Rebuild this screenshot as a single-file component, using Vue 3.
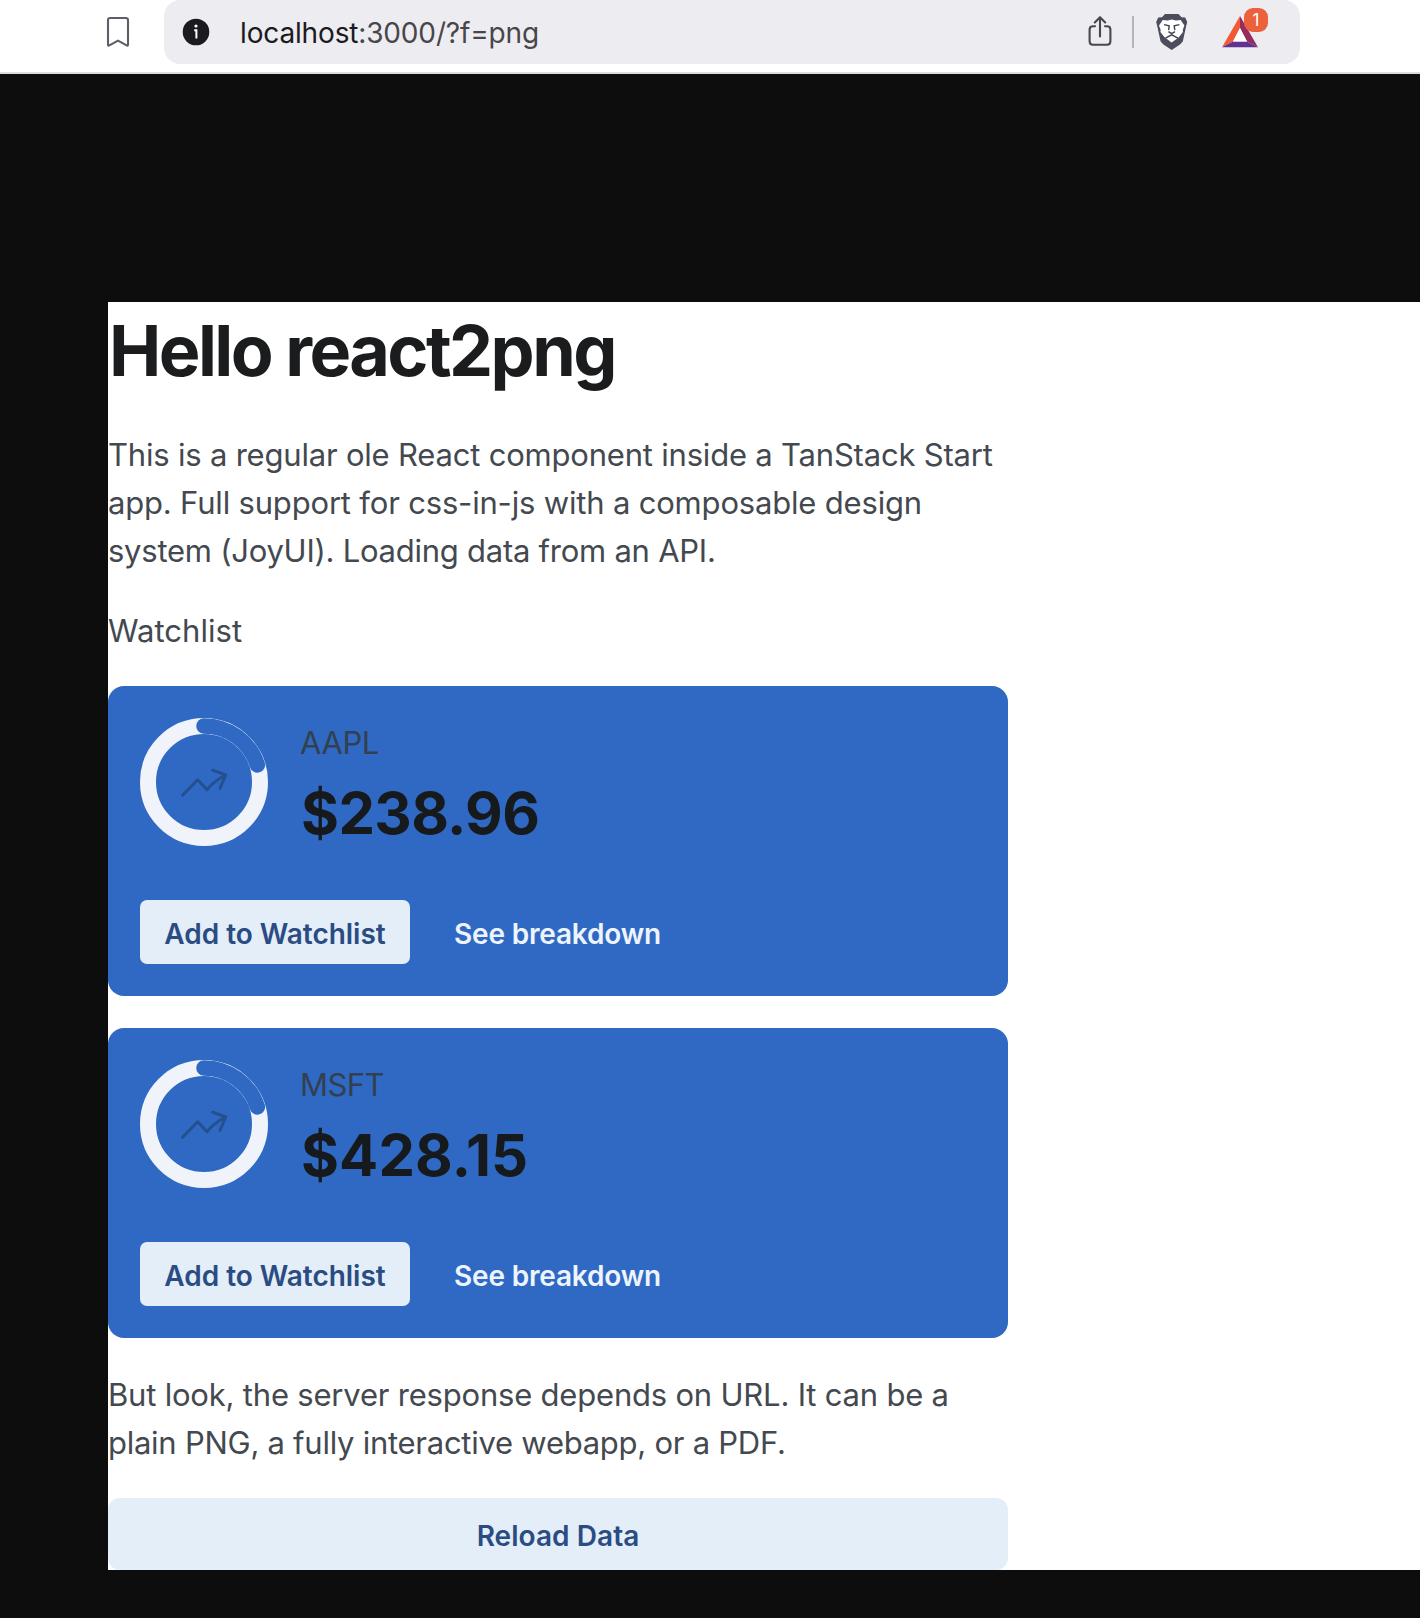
<script setup>
const stocks = [
  { symbol: 'AAPL', price: '$238.96', key: 'aapl' },
  { symbol: 'MSFT', price: '$428.15', key: 'msft' },
]
</script>

<template>
  <div class="window">
    <header class="toolbar">
      <svg class="bookmark" width="24" height="32" viewBox="0 0 24 32">
        <path d="M4.2 2H19.8Q22 2 22 4.2V28.6Q22 30.2 20.6 29.4L12 24.6L3.4 29.4Q2 30.2 2 28.6V4.2Q2 2 4.2 2Z" fill="none" stroke="#5d5e66" stroke-width="2.1" stroke-linejoin="round" />
      </svg>
      <div class="address">
        <svg class="info" width="28" height="28" viewBox="0 0 28 28">
          <circle cx="14" cy="14" r="13.3" fill="#1b1a20" />
          <circle cx="14" cy="8" r="1.6" fill="#fff" />
          <path d="M12.2 12.2H14.4V20.6" fill="none" stroke="#fff" stroke-width="2" />
        </svg>
        <div class="url"><span class="host">localhost</span>:3000/?f=png</div>
        <svg class="share" width="24" height="32" viewBox="0 0 24 32">
          <path d="M7 10.2H5Q1.6 10.2 1.6 13.6V25Q1.6 28.8 5 28.8H19Q22.4 28.8 22.4 25V13.6Q22.4 10.2 19 10.2H17M12 20.5V1.4M6.8 6.5L12 1.2L17.2 6.5" fill="none" stroke="#48474d" stroke-width="2.1" stroke-linecap="round" stroke-linejoin="round" />
        </svg>
        <span class="divider"></span>
        <svg class="lion" width="32" height="36" viewBox="0 0 32 36">
          <path d="M9 0H22.5L25.5 3.2L29.2 3.6L31.2 8L30.3 11.5L26.8 27.5L24 30.6L15.7 36L7.4 30.6L4.6 27.5L1.1 11.5L0.2 8L2.2 3.6L6 3.2Z" fill="#4b4d5d" />
          <path d="M6.7 6L11.5 6.6L15.7 5.6L20 6.6L24.7 6L28.4 11.5L26.7 16L27 18L22.6 23.6L15.7 28.4L8.8 23.6L4.4 18L4.7 16L3 11.5Z" fill="#fff" />
          <path d="M8 10.6L13.2 11.8L12.6 16.2M23.4 10.6L18.2 11.8L18.8 16.2M12.4 17.6L15.7 19.6L19 17.6M15.7 19.6V21.4M9.4 24.2L15.7 20.9L22 24.2" fill="none" stroke="#3f4150" stroke-width="1.4" />
        </svg>
        <div class="rewards">
          <svg width="36" height="32" viewBox="0 0 36 32">
            <path d="M18 0L0 31.2L11 25.5L18 12Z" fill="#f15a35" />
            <path d="M18 0L36 31.2L25 25.5L18 12Z" fill="#962b60" />
            <path d="M0 31.2H36L25 25.5H11Z" fill="#623091" />
            <path d="M18 12L25 25.5H11Z" fill="#fff" />
          </svg>
          <span class="badge">1</span>
        </div>
      </div>
    </header>

    <main class="canvas">
      <section class="page">
        <h1>Hello react2png</h1>
        <p class="copy">
          <span class="line intro-a">This is a regular ole React component inside a TanStack Start</span>
          <span class="line intro-b">app. Full support for css-in-js with a composable design</span>
          <span class="line intro-c">system (JoyUI). Loading data from an API.</span>
        </p>
        <p class="copy label">Watchlist</p>

        <article v-for="stock in stocks" :key="stock.symbol" class="card">
          <div class="summary">
            <svg class="progress" width="128" height="128" viewBox="0 0 128 128">
              <circle cx="64" cy="64" r="56" fill="none" stroke="#f0f4fa" stroke-width="16" />
              <circle cx="64" cy="64" r="56" fill="none" stroke="#2f69c3" stroke-width="15.6" stroke-linecap="round" stroke-dasharray="70.4 400" transform="rotate(-90 64 64)" />
              <path d="M42.6 77.3L57.7 61.8L67 71.8Q71.5 65 85.4 57M72.6 52.2L85.7 57L80 70.4" fill="none" stroke="#24508f" stroke-width="3" stroke-linecap="round" stroke-linejoin="round" />
            </svg>
            <div class="quote">
              <div class="symbol" :class="stock.key">{{ stock.symbol }}</div>
              <h2 :class="stock.key">{{ stock.price }}</h2>
            </div>
          </div>
          <div class="actions">
            <button class="soft">Add to Watchlist</button>
            <button class="plain">See breakdown</button>
          </div>
        </article>

        <p class="copy">
          <span class="line outro-a">But look, the server response depends on URL. It can be a</span>
          <span class="line outro-b">plain PNG, a fully interactive webapp, or a PDF.</span>
        </p>
        <button class="reload">Reload Data</button>
      </section>
    </main>
  </div>
</template>

<style>
body {
  margin: 0;
  background: #0d0d0d;
}
</style>

<style scoped>
.window {
  width: 1420px;
  height: 1618px;
  overflow: hidden;
  box-sizing: border-box;
  background: #0d0d0d;
  font-family: "Inter", "Liberation Sans", sans-serif;
}
.toolbar {
  display: flex;
  align-items: flex-start;
  box-sizing: border-box;
  height: 74px;
  padding-left: 106px;
  background: #fff;
  border-bottom: 2px solid #dddce0;
}
.bookmark {
  margin: 16px 34px 0 0;
}
.address {
  display: flex;
  align-items: center;
  box-sizing: border-box;
  width: 1136px;
  height: 64px;
  padding: 0 42px 0 18px;
  border-radius: 16px;
  background: #edecf1;
}
.info {
  margin-right: 30px;
}
.url {
  flex: 1;
  padding-top: 1px;
  color: #47464b;
  font-size: 28px;
  line-height: 40px;
  letter-spacing: -0.15px;
}
.host {
  color: #1b1a20;
}
.share {
  margin-right: 20px;
}
.divider {
  width: 2px;
  height: 32px;
  margin-right: 22px;
  background: #b5b4b9;
}
.lion {
  margin-right: 34px;
}
.rewards {
  position: relative;
  width: 36px;
  height: 32px;
}
.rewards svg {
  display: block;
}
.badge {
  position: absolute;
  top: -8px;
  left: 22px;
  width: 24px;
  height: 24px;
  border-radius: 9px;
  background: #ea613c;
  color: #fff;
  font-size: 17px;
  line-height: 24px;
  text-align: center;
}
.canvas {
  padding: 228px 0 48px 108px;
}
.page {
  display: flex;
  flex-direction: column;
  gap: 32px;
  box-sizing: border-box;
  height: 1268px;
  padding-right: 412px;
  background: #fff;
}
h1,
h2,
p {
  margin: 0;
}
h1 {
  box-sizing: border-box;
  height: 96px;
  padding: 1px 0 0 1px;
  color: #1a1c1e;
  font-size: 70px;
  font-weight: 700;
  line-height: 96px;
  letter-spacing: -2.55px;
  white-space: nowrap;
}
.copy {
  padding-top: 1px;
  margin-bottom: -1px;
  color: #43494f;
  font-size: 31px;
  line-height: 48px;
  white-space: nowrap;
}
.line {
  display: block;
}
.intro-a { letter-spacing: -0.2px; }
.intro-b { letter-spacing: -0.18px; }
.intro-c { letter-spacing: -0.25px; }
.outro-a { letter-spacing: -0.2px; }
.outro-b { letter-spacing: -0.26px; }
.label { letter-spacing: 0.03px; }
.card {
  display: flex;
  flex-direction: column;
  justify-content: space-between;
  box-sizing: border-box;
  width: 900px;
  height: 310px;
  padding: 32px;
  border-radius: 16px;
  background: #2f69c3;
}
.summary {
  display: flex;
  gap: 32px;
}
.symbol {
  padding-top: 1px;
  color: #32404f;
  font-size: 31px;
  line-height: 48px;
}
.symbol.aapl { letter-spacing: -0.4px; }
.symbol.msft { letter-spacing: -0.55px; }
h2 {
  margin-top: 6px;
  padding-left: 1px;
  color: #171a1c;
  font-size: 58px;
  font-weight: 700;
  line-height: 80px;
}
h2.aapl { letter-spacing: -0.6px; }
h2.msft { letter-spacing: 0.1px; }
.actions {
  display: flex;
  gap: 20px;
}
button {
  box-sizing: border-box;
  height: 64px;
  padding: 3px 24px 0;
  border: 0;
  border-radius: 7px;
  font: 600 28px/40px "Inter", "Liberation Sans", sans-serif;
  white-space: nowrap;
}
.soft {
  width: 270px;
  background: #e4eef9;
  color: #2a4c82;
  letter-spacing: -0.03px;
}
.plain {
  background: transparent;
  color: #edf4fd;
  letter-spacing: -0.18px;
}
.reload {
  width: 900px;
  height: 72px;
  border-radius: 12px;
  background: #e4eef9;
  color: #2a4c82;
  letter-spacing: 0.05px;
}
</style>
